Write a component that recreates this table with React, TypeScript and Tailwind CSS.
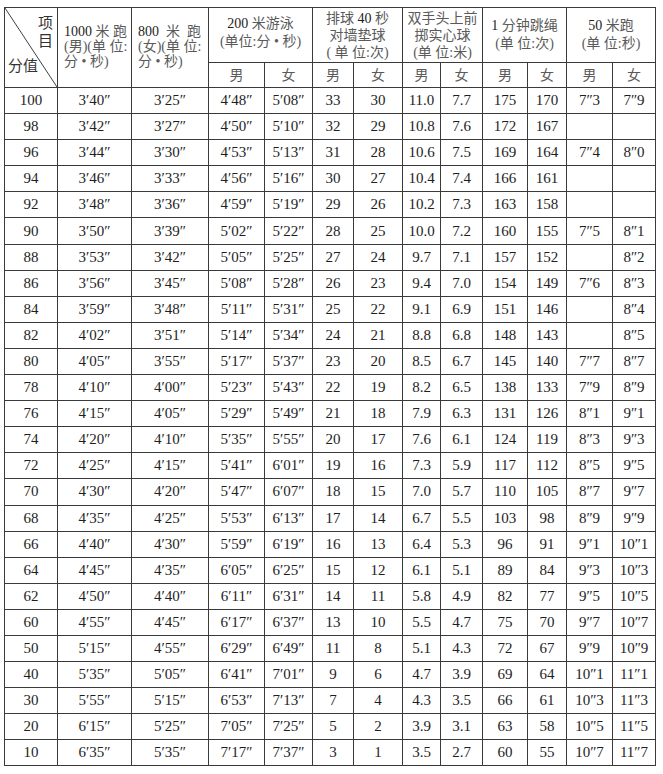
import React from "react";

type Row = string[];

const rows: Row[] = [
  ["100", "3′40″", "3′25″", "4′48″", "5′08″", "33", "30", "11.0", "7.7", "175", "170", "7″3", "7″9"],
  ["98", "3′42″", "3′27″", "4′50″", "5′10″", "32", "29", "10.8", "7.6", "172", "167", "", ""],
  ["96", "3′44″", "3′30″", "4′53″", "5′13″", "31", "28", "10.6", "7.5", "169", "164", "7″4", "8″0"],
  ["94", "3′46″", "3′33″", "4′56″", "5′16″", "30", "27", "10.4", "7.4", "166", "161", "", ""],
  ["92", "3′48″", "3′36″", "4′59″", "5′19″", "29", "26", "10.2", "7.3", "163", "158", "", ""],
  ["90", "3′50″", "3′39″", "5′02″", "5′22″", "28", "25", "10.0", "7.2", "160", "155", "7″5", "8″1"],
  ["88", "3′53″", "3′42″", "5′05″", "5′25″", "27", "24", "9.7", "7.1", "157", "152", "", "8″2"],
  ["86", "3′56″", "3′45″", "5′08″", "5′28″", "26", "23", "9.4", "7.0", "154", "149", "7″6", "8″3"],
  ["84", "3′59″", "3′48″", "5′11″", "5′31″", "25", "22", "9.1", "6.9", "151", "146", "", "8″4"],
  ["82", "4′02″", "3′51″", "5′14″", "5′34″", "24", "21", "8.8", "6.8", "148", "143", "", "8″5"],
  ["80", "4′05″", "3′55″", "5′17″", "5′37″", "23", "20", "8.5", "6.7", "145", "140", "7″7", "8″7"],
  ["78", "4′10″", "4′00″", "5′23″", "5′43″", "22", "19", "8.2", "6.5", "138", "133", "7″9", "8″9"],
  ["76", "4′15″", "4′05″", "5′29″", "5′49″", "21", "18", "7.9", "6.3", "131", "126", "8″1", "9″1"],
  ["74", "4′20″", "4′10″", "5′35″", "5′55″", "20", "17", "7.6", "6.1", "124", "119", "8″3", "9″3"],
  ["72", "4′25″", "4′15″", "5′41″", "6′01″", "19", "16", "7.3", "5.9", "117", "112", "8″5", "9″5"],
  ["70", "4′30″", "4′20″", "5′47″", "6′07″", "18", "15", "7.0", "5.7", "110", "105", "8″7", "9″7"],
  ["68", "4′35″", "4′25″", "5′53″", "6′13″", "17", "14", "6.7", "5.5", "103", "98", "8″9", "9″9"],
  ["66", "4′40″", "4′30″", "5′59″", "6′19″", "16", "13", "6.4", "5.3", "96", "91", "9″1", "10″1"],
  ["64", "4′45″", "4′35″", "6′05″", "6′25″", "15", "12", "6.1", "5.1", "89", "84", "9″3", "10″3"],
  ["62", "4′50″", "4′40″", "6′11″", "6′31″", "14", "11", "5.8", "4.9", "82", "77", "9″5", "10″5"],
  ["60", "4′55″", "4′45″", "6′17″", "6′37″", "13", "10", "5.5", "4.7", "75", "70", "9″7", "10″7"],
  ["50", "5′15″", "4′55″", "6′29″", "6′49″", "11", "8", "5.1", "4.3", "72", "67", "9″9", "10″9"],
  ["40", "5′35″", "5′05″", "6′41″", "7′01″", "9", "6", "4.7", "3.9", "69", "64", "10″1", "11″1"],
  ["30", "5′55″", "5′15″", "6′53″", "7′13″", "7", "4", "4.3", "3.5", "66", "61", "10″3", "11″3"],
  ["20", "6′15″", "5′25″", "7′05″", "7′25″", "5", "2", "3.9", "3.1", "63", "58", "10″5", "11″5"],
  ["10", "6′35″", "5′35″", "7′17″", "7′37″", "3", "1", "3.5", "2.7", "60", "55", "10″7", "11″7"],
];

const widths = [53, 74, 77, 56, 48, 41, 49, 38, 42, 45, 39, 46, 43];

const cell = "border border-[#3a3a3a] p-0";
const cjk = "text-[#5a5a5a]";

function Sex({ label }: { label: string }) {
  return <th className={`${cell} ${cjk} h-[25px] text-center align-middle text-[14px] font-normal`}>{label}</th>;
}

export default function App() {
  return (
    <div className="min-h-screen bg-white pl-[4px] pt-[7px] font-['Liberation_Serif','Noto_Sans_CJK_SC',serif] text-[#1e1e1e]">
      <table className="w-[651px] table-fixed border-collapse">
        <colgroup>
          {widths.map((w, i) => (
            <col key={i} style={{ width: w }} />
          ))}
        </colgroup>
        <thead>
          <tr className="h-[55px]">
            <th rowSpan={2} className={`${cell} relative font-normal`}>
              <svg className="absolute inset-0 h-full w-full" viewBox="0 0 53 80" preserveAspectRatio="none">
                <line x1="0" y1="0" x2="53" y2="80" stroke="#3a3a3a" strokeWidth="1" />
              </svg>
              <div className="absolute right-[4px] top-[6px] flex flex-col items-center text-[15px] leading-[18px] text-[#333]">
                <span>项</span>
                <span>目</span>
              </div>
              <div className="absolute bottom-[12px] left-[3px] text-[15px] leading-[18px] text-[#333]">分值</div>
            </th>
            <th rowSpan={2} className={`${cell} pl-[6px] pb-[2px] text-left align-middle text-[14px] font-normal leading-[15px]`}>
              <div>1000 <span className={cjk}>米 跑</span></div>
              <div className={cjk}>(男)(单 位:</div>
              <div className={cjk}>分 • 秒)</div>
            </th>
            <th rowSpan={2} className={`${cell} pl-[6px] pb-[2px] text-left align-middle text-[14px] font-normal leading-[15px]`}>
              <div>800 &nbsp;<span className={cjk}>米 &nbsp;跑</span></div>
              <div className={cjk}>(女)(单 位:</div>
              <div className={cjk}>分 • 秒)</div>
            </th>
            <th colSpan={2} className={`${cell} pb-[4px] text-center align-middle text-[14px] font-normal leading-[18px]`}>
              <div>200 <span className={cjk}>米游泳</span></div>
              <div className={cjk}>(单位:分 • 秒)</div>
            </th>
            <th colSpan={2} className={`${cell} text-center align-middle text-[14px] font-normal leading-[17px]`}>
              <div className={cjk}>排球 <span className="text-[#1e1e1e]">40</span> 秒</div>
              <div className={cjk}>对墙垫球</div>
              <div className={cjk}>( 单 位:次)</div>
            </th>
            <th colSpan={2} className={`${cell} ${cjk} text-center align-middle text-[14px] font-normal leading-[17px]`}>
              <div>双手头上前</div>
              <div>掷实心球</div>
              <div>(单 位:米)</div>
            </th>
            <th colSpan={2} className={`${cell} text-center align-middle text-[14px] font-normal leading-[18px]`}>
              <div>1 <span className={cjk}>分钟跳绳</span></div>
              <div className={cjk}>(单 位:次)</div>
            </th>
            <th colSpan={2} className={`${cell} text-center align-middle text-[14px] font-normal leading-[18px]`}>
              <div>50 <span className={cjk}>米跑</span></div>
              <div className={cjk}>(单 位:秒)</div>
            </th>
          </tr>
          <tr>
            {["男", "女", "男", "女", "男", "女", "男", "女", "男", "女"].map((s, i) => (
              <Sex key={i} label={s} />
            ))}
          </tr>
        </thead>
        <tbody>
          {rows.map((r) => (
            <tr key={r[0]} className="h-[26.1px]">
              {r.map((v, i) => (
                <td key={i} className={`${cell} text-center align-middle text-[15px] leading-none`}>
                  {v}
                </td>
              ))}
            </tr>
          ))}
        </tbody>
      </table>
    </div>
  );
}
